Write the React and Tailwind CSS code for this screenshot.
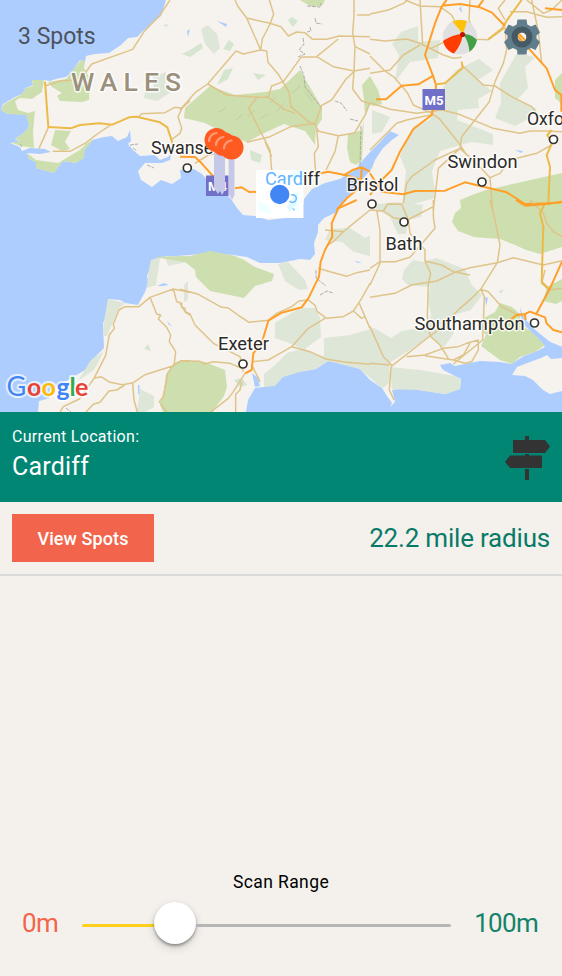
const LAND =
  "M166 0 161 16 143 31 137 37 128 38 121 45 109 53 95 54 86 56 85 62 80 60 72 72 66 77 56 79 50 81 44 80 32 80 33 85 26 88 22 94 15 97 3 104 1 110 8 114 22 113 28 115 29 126 25 132 15 139 20 142 10 143 20 147 22 151 30 148 45 149 51 152 40 154 27 153 29 159 36 162 36 168 48 171 54 173 58 167 63 161 76 163 83 157 85 146 92 140 104 137 112 136 118 141 127 137 130 130 131 141 128 144 133 150 140 156 155 155 160 160 168 157 172 151 170 160 162 163 145 163 138 171 141 180 152 187 161 180 172 184 181 178 180 170 194 169 202 174 208 181 222 189 231 199 237 208 243 215 255 216 268 220 303 216 303 207 304 199 312 189 325 183 340 179 355 170 362 161 370 152 380 142 390 131 399 135 392 140 383 148 375 160 372 168 362 180 352 192 345 199 340 207 335 213 324 218 318 225 318 232 314 243 315 254 310 260 300 259 280 263 260 263 247 257 233 255 210 253 190 255 162 257 152 260 150 270 147 275 148 283 145 292 138 305 125 303 120 300 108 299 107 315 103 323 104 348 92 360 90 367 75 376 60 385 50 390 50 398 39 401 38 412H246L248 400 255 388 263 387 275 385 284 372 303 371 316 369 328 361 345 364 360 369 370 380 382 388 387 396 392 403 390 407 395 402 392 390 407 388 445 394 460 389 461 379 453 375 443 370 440 365 450 363 455 366 480 361 500 362 511 364 524 356 535 352 545 347 537 337 522 323 520 308 523 317 535 330 550 342 562 347V0Z";

const PARKS = [
  "M81 60 85 62 84 68 88 75 90 80 89 100 82 102 60 101 57 96 62 93 52 87 48 82 66 79Z",
  "M32 80 44 80 42 92 32 99 20 98 15 101 18 110 28 113 35 111 33 132 34 148 21 146 12 143 20 141 15 139 25 132 29 126 26 115 8 114 1 110 4 104 22 94 26 88 33 86Z",
  "M55 130 71 131 65 142 70 149 62 151 51 145Z",
  "M27 153 36 160 58 163 80 150 86 144 94 139 85 150 84 158 76 163 63 161 54 173 36 168 36 162 29 159Z",
  "M210 86 235 95 265 92 280 89 300 70 322 108 322 119 316 128 315 145 305 131 284 124 262 134 247 142 228 135 205 123 184 118 185 108Z",
  "M300 0H325L322 6H310Z",
  "M562 73 555 80 555 98 562 104ZM370 76 378 90 382 104 374 106 370 105 364 118 362 160 356 165 350 162 347 148 348 134 362 130 365 115 364 100 362 85Z",
  "M153 257 190 256 210 251 235 256 244 260 255 267 274 274 272 281 255 286 244 298 210 291 196 277 195 270 185 262Z",
  "M176 362 182 360 205 362 225 370 227 387 224 396 215 408 213 412H163L160 405 164 390 166 374Z",
  "M486 190 562 173V247L540 254 526 250 515 245 500 239 486 238 474 237 458 231 452 222 455 213 461 208 460 200 472 195Z",
  "M562 279 547 287 543 301 556 304 562 301Z",
  "M484 318 495 312 500 303 512 307 520 314 521 325 535 334 545 345 535 352 520 357 512 364 500 360 481 346 486 335 481 329Z",
];
const WOODS = [
  "M479 59 493 70 478 80 492 91 478 99 479 108 458 110 457 120 493 134 493 145 471 142 440 151 432 171 436 198 402 207 406 171 400 156 414 126 430 120 440 92 456 70Z",
  "M517 53 535 57 525 67 528 88 517 100 537 109 530 118 515 126 495 118 501 103 500 83Z",
  "M401 32 418 26 418 42 440 40 438 58 410 62 395 82 399 55 392 44Z",
  "M372 110 390 117 382 132 372 134ZM371 205 395 202 423 205 421 217 408 220 406 234 398 234 390 217Z",
  "M201 29 208 25 217 34 220 48 214 54 205 44ZM145 92 154 87 153 77 166 72 165 86 170 93 157 101 144 98Z",
  "M330 229 350 228 365 238 370 235V256L354 252 342 242 325 240Z",
  "M278 264 288 262 305 280 308 289 299 290 285 281Z",
  "M275 323 300 308 315 308 320 318 321 337 305 349 314 354 355 363 370 371 382 388 360 369 328 361 316 369 300 372 283 377 275 386 264 387 264 374 274 366 287 353 302 349 292 344 275 338Z",
  "M324 338 350 335 374 328 391 338 402 331 440 325 430 337 405 353 389 363 390 382 383 388 360 369 343 360 324 358Z",
  "M404 270 413 260 423 262 436 258 465 269 471 284 482 295 471 310 447 317 454 333 444 347 431 338 428 325 431 315 428 299 430 287 408 285 402 279Z",
  "M390 367 420 370 455 376 461 380 460 389 446 394 417 390 392 389Z",
  "M108 299 125 303 118 310 110 329 107 336H103L104 321ZM151 260 160 258 156 285 147 288 148 275ZM104 351 94 370 78 381 91 360Z",
  "M165 256 185 256 187 262 168 266ZM184 285 188 281 188 300 184 302ZM140 389 154 396 154 407 145 412H137Z",
];
const TILES = [
  {
    at: "translate(0 0) scale(.33333)",
    minor: ["M510 0 480 45 432 95 398 148 275 192 257 217 231 239 180 243 135 258", "M415 352 425 341 495 338 524 322 546 325 570 302M546 325 534 350 545 385 540 400 513 420", "M145 383 117 445M158 454H210L255 430 292 402 330 376"],
    major: ["M135 245 145 381 212 385 240 375 298 370 337 374 387 352 410 350 480 367 502 382 516 425 520 455"],
    motor: [],
  },
  {
    at: "translate(180 0) scale(.33333)",
    minor: [
      "M165 0 173 18 200 54 242 150 260 153 264 187 295 223 327 276 333 320 385 365 406 375 416 394 475 407 524 399 558 340 568 310 544 302M200 54 270 70 303 80 325 108 350 96 374 98 398 118 440 118 478 108 570 110M268 0 281 42 270 72 247 117 242 150 190 162 168 153 83 252 45 278 0 330M475 117 410 170 363 172 310 245 275 258 264 293M410 170 460 200 522 213 570 205M83 252 140 285 230 292 265 292 313 328 345 340",
      "M233 290 206 325 270 450 275 510M200 427 270 410 332 380 406 370M522 0V45L518 100 525 140 522 213 518 267 545 303M531 45H570M525 140 570 162M524 213 498 237 455 300 425 316 406 370M475 407 465 455 438 510M410 387 415 440 403 460 408 535M45 490 85 465 140 455M255 425 275 470",
    ],
    major: [],
    motor: ["M0 470 45 471 65 490 105 535M165 565 185 562 208 576 255 575 330 565M410 522 445 515 495 525 545 540M490 527 520 509 545 502 570 515M545 505 542 560 500 595 470 630"],
  },
  {
    at: "translate(370 0) scale(.33333)",
    minor: [
      "M0 42 55 30 100 10 115 0M150 0 158 135 183 145 225 125M0 118 45 123 110 117 150 130 160 135 220 165 250 175 275 172M105 0 150 18 210 20 245 45 260 75 318 118 355 119 407 82M300 0 297 60 318 118M0 168 45 213 74 233 112 278 130 315 180 337M0 220 60 210 100 165 150 135M405 82 410 150 400 190 375 245 358 305 275 410 270 448M275 195 340 255 375 258 425 290 485 320 512 355",
      "M0 308 60 328 140 340 215 330 265 342 370 385 450 400 480 393H530L576 395M180 337 207 355 267 430 290 465M180 345 110 360 80 370 0 450M270 445 195 480 125 530 110 550 100 610M270 445 205 505 190 630M270 445 320 490 360 533 368 630M360 533 390 520 420 480 500 460 545 435M405 0 385 25 405 60M420 35 470 35 530 52 576 50M485 0 505 95 515 190M470 0 520 40 545 30 576 0",
    ],
    major: ["M455 0 410 62 397 85 355 118M275 185 278 203 225 250 200 253M545 390 532 405 546 430 530 465 540 500 535 610"],
    motor: ["M230 0 215 20 195 70 165 165 190 230 198 255 195 300 185 345 130 387 90 455 65 510 35 540 0 585M215 17 270 12 330 22 365 37 405 78M440 105 530 205 555 270 574 285V335M325 20 340 0M525 25 576 30M18 298H48L95 257 145 253 190 227M0 520 35 575 100 583 135 573 225 572 285 547 340 560 410 577 465 612 540 610 576 607"],
  },
  {
    at: "translate(0 200) scale(.33333)",
    minor: ["M180 636 190 620 238 597 282 535 317 466 328 405 343 385 340 372 357 330 375 320H417L450 292 520 267 570 277M282 535 303 530 330 547 367 554 400 548 435 524 520 497 545 482H570M258 636 280 613 300 607 327 573 350 570 375 555M398 550 402 600 412 636M450 292 470 342 482 345 475 357 500 382 512 405 508 425 527 455 523 490 503 520 490 590 478 605 500 636M520 267 530 305 545 310 545 322 555 325 557 337 570 345"],
    major: [], motor: [],
  },
  {
    at: "translate(180 200) scale(.33333)",
    minor: ["M0 268 55 283 125 322 143 323 178 348 207 367 265 361 290 340 335 320 357 303 385 300 405 316 412 335 440 355 490 350 520 333 545 295 570 250M0 310 15 335 30 342 45 375 100 430 180 470 190 515M0 482 60 484 75 492 100 485 150 490 190 507M220 485 265 480 300 460 335 440 385 385 435 355M335 440 390 455 440 478 500 487 570 493M195 520 160 575 145 595 92 636M185 545 180 570 167 583V636M218 500 240 545M415 205 450 215 500 229 530 218 570 210M435 90 490 95 460 125 440 137M490 95 570 30M520 333 545 355 555 350M538 310 570 385"],
    major: [],
    motor: ["M530 0 475 25 455 70 457 110 435 150 422 185 417 230 385 295 365 322 305 338 265 362 245 430 220 460 215 510 195 520"],
  },
  {
    at: "translate(370 200) scale(.33333)",
    minor: ["M20 30 30 90V190L0 255M0 30 40 33 70 53 112 60 190 20M40 33 53 12 95 13 115 60 120 100 165 150 165 183 215 195 250 215 300 225M0 205 30 185 75 185 120 172 195 85 190 50 190 0M0 292 75 280 125 255 200 243 255 217 300 203 382 188 430 173 520 195 576 182M360 0 375 60 390 135 382 188 332 268 343 290 338 420 250 492M332 268 305 295 270 325 235 360 225 375 180 408 63 500 58 570 72 600M332 268 355 275 395 320 440 343 465 350M165 183 182 220 175 250 172 350 180 408 210 435 235 475M0 380 40 470 65 495M0 490 60 495M110 470 165 465 220 445 265 440 290 430 325 420 325 450 305 485 285 490 250 480 165 467M250 480 280 465 300 430M480 0 520 40 530 70 550 95 576 110M525 210 515 250 537 270 576 265"],
    major: ["M525 10 510 40 520 80 515 245 537 267"],
    motor: ["M438 0 465 17 530 12 576 5M576 185 540 265 497 345M418 362 440 345 465 342 480 335 525 352 530 370 550 390 576 397M465 342 467 360"],
  },
];
const CITIES = [
  ["Bristol", 346.5, 191, 52, 372, 204],
  ["Bath", 385.5, 250, 37, 404, 222],
  ["Swindon", 447.5, 168, 70, 482, 182],
  ["Southampton", 414.5, 330, 110, 534.5, 323],
  ["Exeter", 218, 350, 51, 243, 364],
];

function Halo({ children, ...p }) {
  return (
    <text fontFamily="Roboto, sans-serif" fontWeight="400" fontSize="18" fill="#2c2a27" stroke="#fff" strokeOpacity=".8" strokeWidth="3" strokeLinejoin="round" paintOrder="stroke" lengthAdjust="spacingAndGlyphs" {...p}>
      {children}
    </text>
  );
}

function Shield({ x, y, w, h, label }) {
  return (
    <g>
      <rect x={x} y={y} width={w} height={h} fill="#7070c8" />
      <text x={x + 2} y={y + 15.5} textLength={w - 3.5} lengthAdjust="spacingAndGlyphs" fontFamily="Roboto, sans-serif" fontWeight="700" fontSize="13.5" fill="#fff">{label}</text>
    </g>
  );
}

function Pin({ x, y }) {
  return (
    <g>
      <circle cx={x} cy={y} r="12" fill="#ff5a20" />
      <path d={`M${x - 7.5} ${y + 1}A8 8 0 0 1 ${x} ${y - 7}`} fill="none" stroke="#ff9a78" strokeWidth="2.2" strokeLinecap="round" />
    </g>
  );
}

function MapCanvas() {
  return (
    <svg className="block h-full w-full" viewBox="0 0 562 412">
      <rect width="562" height="412" fill="#adcdff" />
      <path d={LAND} fill="#f6f3ef" />
      {WOODS.map((d) => <path key={d} d={d} fill="#dde6d7" />)}
      {PARKS.map((d) => <path key={d} d={d} fill="#cddfae" />)}
      <path d="M520 306 523 317 535 330 550 342 562 347V355L548 352 545 345 535 335 523 324Z" fill="#adcdff" />
      <path d="M512 375 517 367 530 362 541 358 547 355 551 359 562 358V391L550 394 543 390 533 380 525 376Z" fill="#f6f3ef" />
      <g fill="#d5e5d0">
        <path d="M163 25 169 24 166 27ZM288 20 292 17 298 21 293 27ZM253 73 266 75 258 80ZM217 85 224 70 233 68 228 79ZM229 40 234 44 230 51 223 49ZM182 54 190 50 201 43 203 48 190 57ZM250 150 262 155 260 163 251 160ZM144 349 148 344 151 351ZM233 144 239 148 234 153ZM498 292 503 289 502 293Z" />
        <path d="M234 380 242 378 247 385 240 387Z" />
      </g>
      <g fill="#adcdff">
        <path d="M217 21 227 24 226 27ZM187 31 190 29 188 37ZM157 286 164 283 169 285 162 286ZM167 321 172 326 169 325ZM252 373 258 378 260 386 255 387ZM515 150 523 151 521 153ZM459 9 461 6 462 13ZM485 297 488 298 486 306ZM138 385 139.500 385V394H138ZM354 261 362 262 358 263Z" />
      </g>
      <path d="M307 6 320 7 321 3M315 18 316 23 322 24M310 27 311 31 307 32M303 38 304 44 299 50 305 54 298 57M300 66 304 76 305 87 313 97 321 107M335 101 341 103 347 111M350 119 358 121M361 126 360 165M316 270 316 278 326 286M320 295 327 291 333 293M130 145 138 144M133 148 137 151M147 165 154 168M20 144 22 147M66 408 71 412" fill="none" stroke="#a8a6a4" strokeWidth=".9" strokeDasharray="4 1" />
      <path d="M236 120 243 114M248 116 255 110M260 119 268 114M276 112 284 103M219 112 226 108M292 93 300 86M305 92 312 101M270 103 275 97" fill="none" stroke="#bdcfa5" strokeWidth="1" />
      {TILES.map((t) => (
        <g key={t.at} transform={t.at} fill="none" strokeLinejoin="round">
          {t.minor.map((d) => <path key={d} d={d} stroke="#dfc48a" strokeWidth="4.5" />)}
          {t.major.map((d) => <path key={d} d={d} stroke="#ebba48" strokeWidth="6" />)}
          {t.motor.map((d) => <path key={d} d={d} stroke="#ff9f28" strokeWidth="6" />)}
        </g>
      ))}
      <Halo x="71" y="91" fontSize="26.5" fontWeight="500" textLength="110" lengthAdjust="spacing" fill="#9a907c">WALES</Halo>
      <Halo x="151" y="154" textLength="72">Swansea</Halo>
      <Halo x="265" y="184.500" textLength="55">Cardiff</Halo>
      {CITIES.map(([n, x, y, w, cx, cy]) => (
        <g key={n}>
          <Halo x={x} y={y} textLength={w}>{n}</Halo>
          <circle cx={cx} cy={cy} r="4" fill="#fff" stroke="#37342f" strokeWidth="1.7" />
        </g>
      ))}
      <Halo x="527" y="125" textLength="37">Oxfo</Halo>
      <circle cx="553.500" cy="139.500" r="4" fill="#fff" stroke="#37342f" strokeWidth="1.700" />
      <circle cx="187.300" cy="168" r="4" fill="#fff" stroke="#37342f" strokeWidth="1.700" />
      <Shield x={422.500} y={89} w={22.500} h={21} label="M5" />
      <Shield x={206} y={175.500} w={22.500} h={20.500} label="M4" />
      <path d="M214 145H225V190L222 195 220 191 218 194 214 188ZM228.500 155H234.500V195L232 200 229 194Z" fill="#c5c8e8" />
      <Pin x={216.500} y={140} />
      <Pin x={223.500} y={144} />
      <Pin x={231.500} y={147.500} />
      <rect x="256" y="170" width="47.500" height="48" fill="#fff" />
      <path d="M292 170H303V180H288ZM294 195 300 191 298 212 289 205ZM258 200 270 207 272 214 258 211Z" fill="#f0ffff" />
      <path d="M294 196 298 192 296 204 290 212 287 207Z" fill="#ddf8ff" />
      <path d="M292 208 295 209 294 211Z" fill="#79c3ff" />
      <svg x="256" y="170" width="47.500" height="48" viewBox="256 170 47.500 48">
        <text x="265" y="184.500" textLength="55" lengthAdjust="spacingAndGlyphs" fontFamily="Roboto, sans-serif" fontSize="18" fill="#64b3ff">Cardiff</text>
      </svg>
      <circle cx="292.500" cy="198.500" r="3.800" fill="none" stroke="#68b5ff" strokeWidth="1.400" />
      <circle cx="279.700" cy="194.500" r="10.700" fill="#4285f4" stroke="#fff" strokeWidth="2" />
      <text y="395.500" fontFamily="Lato, sans-serif" fontWeight="700" fontSize="25" stroke="#fff" strokeOpacity=".7" strokeWidth="4" strokeLinejoin="round" paintOrder="stroke">
        <tspan x="6.500" fontSize="27" fontWeight="400" fill="#4285f4">G</tspan><tspan x="27" fill="#ea4335">o</tspan><tspan x="41.500" fill="#fbbc05">o</tspan><tspan x="56.500" fill="#4285f4">g</tspan><tspan x="69.500" fill="#34a853">l</tspan><tspan x="75" fill="#ea4335">e</tspan>
      </text>
    </svg>
  );
}

function BeachBall() {
  return (
    <svg className="h-9 w-[34px]" viewBox="0 0 34 36">
      <ellipse cx="17" cy="18" rx="17" ry="17.500" fill="#e0e0e0" />
      <path d="M9.500 2.500C14 .5 19 .5 24 2L20 15Z" fill="#ffc107" />
      <path d="M20 15C13 15 6 18 0 22 1.500 28 5 32.500 11 34.500 16 29 19 22 20 15Z" fill="#ff3d00" />
      <path d="M20 15C26 15 30 17 34 21 33 26 30.500 30 26.500 33 26 26 24 20 20 15Z" fill="#43a047" />
      <circle cx="19.500" cy="15.500" r="2.600" fill="#bf1500" />
    </svg>
  );
}

function Gear() {
  return (
    <svg className="h-9 w-9" viewBox="0 0 36 36">
      <path fillRule="evenodd" fill="#607d8b" d="M13.500.5H22.500L23.300 5.500 27 7.500 31.500 5.500 36 13.500 32.500 16.500V19.500L36 23 31.500 31 27 29 23 31 22.500 35.500H13.500L13 31 9 29 4.500 31 0 23 3.500 19.500V16.500L0 13.500 4.500 5.500 9 7.500 12.700 5.500ZM18 13.500A4.500 4.500 0 1 0 18 22.500 4.500 4.500 0 1 0 18 13.500Z" />
      <circle cx="18" cy="18" r="7.500" fill="none" stroke="#455a64" strokeWidth="6" />
      <path d="M14.800 14.800 21.200 21.200" stroke="#ff9f28" strokeWidth="2.200" />
    </svg>
  );
}

function Signpost() {
  return (
    <svg className="mt-0.5 h-11 w-[45px]" viewBox="0 0 45 44" fill="#333">
      <path d="M20 0H24V4H40L45 10.500 40 17H8V4H20ZM20 18H24V19.500H37V32H5L0 26 5 19.500H20ZM20 33H24V44H20Z" />
    </svg>
  );
}

export default function App() {
  return (
    <div className="flex h-[976px] w-[562px] flex-col overflow-hidden bg-[#f4f1ec] font-[Roboto,sans-serif]">
      <section className="relative h-[412px] shrink-0">
        <MapCanvas />
        <div className="absolute inset-x-0 top-0 flex items-start justify-between pt-[19px] pr-[22px] pl-[18px]">
          <span className="mt-0.5 text-[23px] leading-8 text-[#4d535c]">3 Spots</span>
          <div className="flex items-start gap-[27px]">
            <BeachBall />
            <Gear />
          </div>
        </div>
      </section>
      <section className="flex h-[90px] shrink-0 items-center justify-between bg-[#018673] px-3 text-white">
        <div className="flex flex-col pb-1">
          <span className="text-base leading-6 tracking-[0.3px]">Current Location:</span>
          <span className="text-[25px] leading-9 tracking-[0.2px]">Cardiff</span>
        </div>
        <Signpost />
      </section>
      <section className="flex h-[74px] shrink-0 items-center justify-between border-b-2 border-[#dadada] px-3">
        <button className="h-12 w-[142px] bg-[#f2654c] text-[18px] font-medium tracking-[0.1px] text-white">View Spots</button>
        <span className="text-[26px] tracking-[-0.2px] text-[#087b68]">22.2 mile radius</span>
      </section>
      <section className="mt-auto flex flex-col items-center pb-[29px]">
        <span className="text-[17.5px] leading-6 tracking-[0.4px] text-black">Scan Range</span>
        <div className="mt-[5px] flex h-12 w-full items-center pr-6 pl-[22px]">
          <span className="w-[60px] text-[26px] tracking-[-0.5px] text-[#f2654c]">0m</span>
          <div className="mt-1 flex h-[3px] flex-1 items-center">
            <div className="h-[3px] w-[72px] rounded-l bg-[#ffd11d]" />
            <div className="mb-[5px] h-[42px] w-[42px] shrink-0 rounded-full bg-white shadow-[0_2px_3px_rgba(0,0,0,0.35),0_4px_10px_rgba(0,0,0,0.15)]" />
            <div className="h-[3px] flex-1 rounded-r bg-[#b6b6b6]" />
          </div>
          <span className="w-[87px] text-right text-[26px] tracking-[-0.7px] text-[#14836a]">100m</span>
        </div>
      </section>
    </div>
  );
}
